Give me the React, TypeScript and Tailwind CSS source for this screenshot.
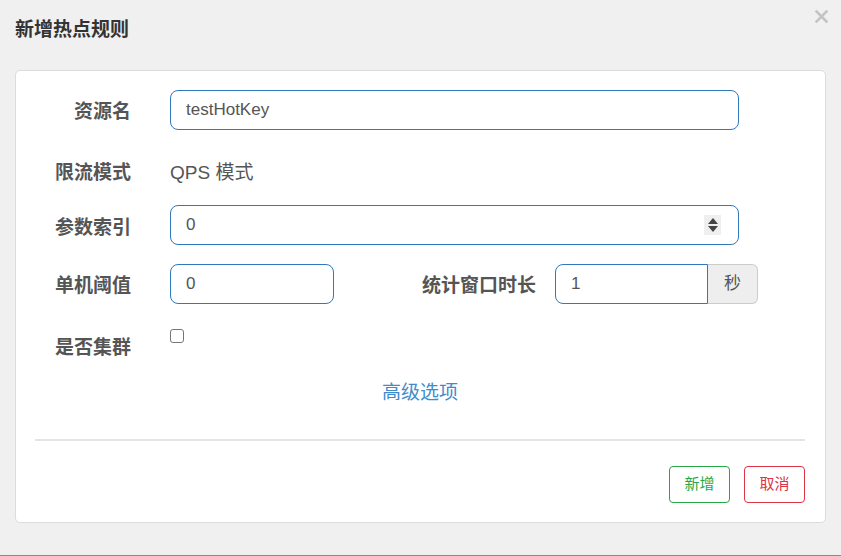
import React from "react";

const FONT = { fontFamily: '"Liberation Sans", Arial, "Noto Sans CJK SC", sans-serif' };

function Label({ children, w = "w-[96px]", shift = "" }: { children: React.ReactNode; w?: string; shift?: string }) {
  return (
    <div className={`${w} ${shift} shrink-0 text-right text-[19px] font-bold leading-none text-[#555]`}>{children}</div>
  );
}

export default function App() {
  return (
    <div
      className="relative box-border h-[556px] w-[841px] overflow-hidden border-b border-[#8a8a8a] bg-[#f0f0f0]"
      style={FONT}
    >
      <div className="px-[15px] pt-[18px]">
        <div className="h-[24px] text-[19px] font-bold leading-[24px] text-[#333]">新增热点规则</div>
      </div>
      <svg className="absolute left-[815px] top-[10px]" width="13" height="13" viewBox="0 0 13 13">
        <path d="M1.5 1.5 L11.5 11.5 M11.5 1.5 L1.5 11.5" stroke="#c4c4c4" strokeWidth="2.6" strokeLinecap="square" />
      </svg>

      <div className="ml-[15px] mt-[28px] box-border h-[453px] w-[811px] rounded-[5px] border border-[#dcdcdc] bg-white pl-[19px] pr-[20px]">
        {/* Row 1 */}
        <div className="mt-[19px] flex h-[40px] items-center">
          <Label shift="pt-[3px]">资源名</Label>
          <div className="ml-[39px] box-border flex h-[40px] w-[569px] items-center rounded-[8px] border border-[#3079bd] pl-[15px] text-[17px] text-[#555]">
            testHotKey
          </div>
        </div>
        {/* Row 2 */}
        <div className="mt-[22px] flex h-[40px] items-center">
          <Label>限流模式</Label>
          <div className="ml-[39px] text-[19px] leading-none text-[#555]">QPS 模式</div>
        </div>
        {/* Row 3 */}
        <div className="mt-[13px] flex h-[40px] items-center">
          <Label shift="pt-[4px]">参数索引</Label>
          <div className="ml-[39px] box-border flex h-[40px] w-[569px] items-center rounded-[8px] border border-[#3079bd] pl-[15px] pr-[17px] text-[17px] text-[#555]">
            <span className="flex-1">0</span>
            <div className="flex h-[20px] w-[17px] flex-col items-center justify-center gap-[2px] bg-[#efefef]">
              <svg width="10" height="6" viewBox="0 0 10 6">
                <path d="M5 0 L10 6 L0 6 Z" fill="#444" />
              </svg>
              <svg width="10" height="6" viewBox="0 0 10 6">
                <path d="M0 0 L10 0 L5 6 Z" fill="#444" />
              </svg>
            </div>
          </div>
        </div>
        {/* Row 4 */}
        <div className="mt-[19px] flex h-[40px] items-center">
          <Label shift="pt-[3px]">单机阈值</Label>
          <div className="ml-[39px] box-border flex h-[40px] w-[164px] items-center rounded-[8px] border border-[#3079bd] pl-[15px] text-[17px] text-[#555]">
            0
          </div>
          <Label w="w-[202px]" shift="pt-[3px]">统计窗口时长</Label>
          <div className="ml-[19px] flex h-[40px]">
            <div className="box-border flex h-[40px] w-[153px] items-center rounded-l-[8px] border border-[#3079bd] pl-[15px] text-[17px] text-[#555]">
              1
            </div>
            <div className="box-border flex h-[40px] w-[50px] items-center justify-center rounded-r-[6px] border border-l-0 border-[#ccc] bg-[#eeeeee] text-[17px] text-[#555]">
              秒
            </div>
          </div>
        </div>
        {/* Row 5 */}
        <div className="mt-[23px] flex h-[40px] items-center">
          <Label>是否集群</Label>
          <div className="ml-[39px] box-border h-[14px] w-[14px] self-start mt-[2px] rounded-[3px] border border-[#767676] bg-white" />
        </div>
        {/* Advanced */}
        <div className="mt-[14px] h-[24px] text-center text-[19px] leading-[24px] text-[#428bca]">高级选项</div>
        <div className="mt-[34px] h-[2px] bg-[#e5e5e5]" />
        <div className="mt-[25px] flex justify-end gap-[14px]">
          <div className="box-border flex h-[37px] w-[61px] items-center justify-center rounded-[4px] border border-[#28a745] text-[15px] text-[#28a745]">
            新增
          </div>
          <div className="box-border flex h-[37px] w-[61px] items-center justify-center rounded-[4px] border border-[#dc3545] text-[15px] text-[#dc3545]">
            取消
          </div>
        </div>
      </div>
    </div>
  );
}
